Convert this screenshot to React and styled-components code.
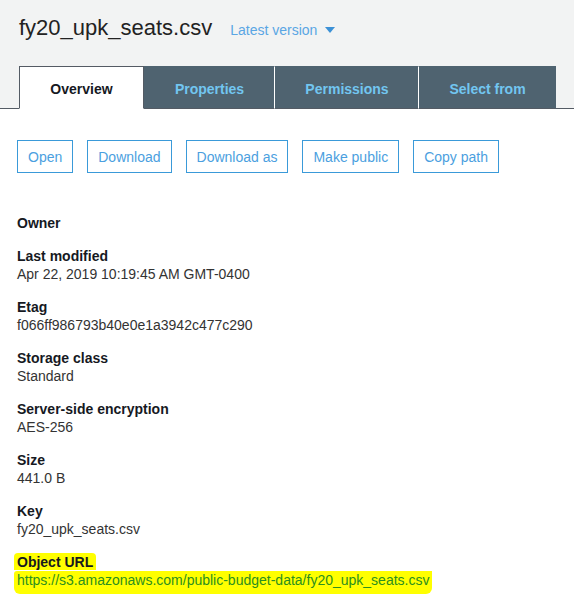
import React from "react";
import styled, { createGlobalStyle } from "styled-components";

const GlobalStyle = createGlobalStyle`
  html, body {
    margin: 0;
    padding: 0;
    background: #ffffff;
    font-family: "Liberation Sans", Arial, sans-serif;
  }
`;

const Page = styled.div`
  width: 574px;
  height: 607px;
  overflow: hidden;
  background: #ffffff;
`;

const Header = styled.div`
  background: #f2f3f3;
  border-bottom: 1px solid #545b64;
  padding: 14px 0 0 19px;
  height: 109px;
  box-sizing: border-box;
  display: flex;
  flex-direction: column;
  justify-content: space-between;
`;

const TitleRow = styled.div`
  display: flex;
  align-items: baseline;
  gap: 18px;
`;

const Title = styled.h1`
  margin: 0;
  font-size: 22px;
  line-height: 28px;
  font-weight: 400;
  color: #222222;
`;

const Version = styled.span`
  display: inline-flex;
  align-items: center;
  gap: 8px;
  font-size: 14px;
  color: #5aa6e4;
`;

const Tabs = styled.div`
  display: flex;
  margin-bottom: -1px;
`;

const Tab = styled.div`
  height: 43px;
  box-sizing: border-box;
  display: flex;
  align-items: center;
  justify-content: center;
  font-size: 14px;
  font-weight: 700;
  width: ${(p) => p.$w}px;
  background: ${(p) => (p.$active ? "#ffffff" : "#4f6370")};
  color: ${(p) => (p.$active ? "#16191f" : "#72c6f0")};
  border: 1px solid ${(p) => (p.$active ? "#545b64" : "#4f6370")};
  border-bottom: ${(p) => (p.$active ? "1px solid #ffffff" : "1px solid #545b64")};
  border-right: 1px solid ${(p) => (p.$active ? "#545b64" : "#ffffff")};
  padding-top: 2px;
  &:last-child {
    border-right-color: #4f6370;
  }
`;

const Body = styled.div`
  padding: 31px 0 0 17px;
`;

const Actions = styled.div`
  display: flex;
  gap: 14px;
  margin-bottom: 41px;
`;

const Button = styled.button`
  height: 33px;
  padding: 0 10px;
  background: #ffffff;
  border: 1px solid #3a9ad9;
  color: #4b9fe0;
  font-family: "Liberation Sans", Arial, sans-serif;
  font-size: 14px;
  cursor: pointer;
`;

const Fields = styled.dl`
  margin: 0;
  display: flex;
  flex-direction: column;
  gap: 15px;
`;

const Field = styled.div`
  display: flex;
  flex-direction: column;
`;

const Label = styled.dt`
  font-size: 14px;
  line-height: 18px;
  font-weight: 700;
  color: #16191f;
`;

const Value = styled.dd`
  margin: 0;
  font-size: 14px;
  line-height: 18px;
  color: #333333;
`;

const Mark = styled.span`
  background: #ffff00;
  margin-left: -3px;
  padding: ${(p) => (p.$url ? "1px 3px 6px" : "1px 3px 0")};
  border-radius: ${(p) => (p.$url ? "3px 0 6px 6px" : "4px 4px 0 0")};
`;

const Link = styled(Mark)`
  color: #2c8f1f;
`;

const Caret = () => (
  <svg width="10" height="6" viewBox="0 0 10 6">
    <path d="M0 0h10L5 6z" fill="#3c91d6" />
  </svg>
);

const tabs = [
  { name: "Overview", w: 125, active: true },
  { name: "Properties", w: 131 },
  { name: "Permissions", w: 144 },
  { name: "Select from", w: 137 },
];

const fields = [
  { label: "Owner" },
  { label: "Last modified", value: "Apr 22, 2019 10:19:45 AM GMT-0400" },
  { label: "Etag", value: "f066ff986793b40e0e1a3942c477c290" },
  { label: "Storage class", value: "Standard" },
  { label: "Server-side encryption", value: "AES-256" },
  { label: "Size", value: "441.0 B" },
  { label: "Key", value: "fy20_upk_seats.csv" },
];

export default function App() {
  return (
    <Page>
      <GlobalStyle />
      <Header>
        <TitleRow>
          <Title>fy20_upk_seats.csv</Title>
          <Version>
            Latest version <Caret />
          </Version>
        </TitleRow>
        <Tabs>
          {tabs.map((t) => (
            <Tab key={t.name} $w={t.w} $active={t.active}>
              {t.name}
            </Tab>
          ))}
        </Tabs>
      </Header>
      <Body>
        <Actions>
          <Button>Open</Button>
          <Button>Download</Button>
          <Button>Download as</Button>
          <Button>Make public</Button>
          <Button>Copy path</Button>
        </Actions>
        <Fields>
          {fields.map((f) => (
            <Field key={f.label}>
              <Label>{f.label}</Label>
              {f.value && <Value>{f.value}</Value>}
            </Field>
          ))}
          <Field>
            <Label>
              <Mark>Object URL</Mark>
            </Label>
            <Value>
              <Link $url>https://s3.amazonaws.com/public-budget-data/fy20_upk_seats.csv</Link>
            </Value>
          </Field>
        </Fields>
      </Body>
    </Page>
  );
}
